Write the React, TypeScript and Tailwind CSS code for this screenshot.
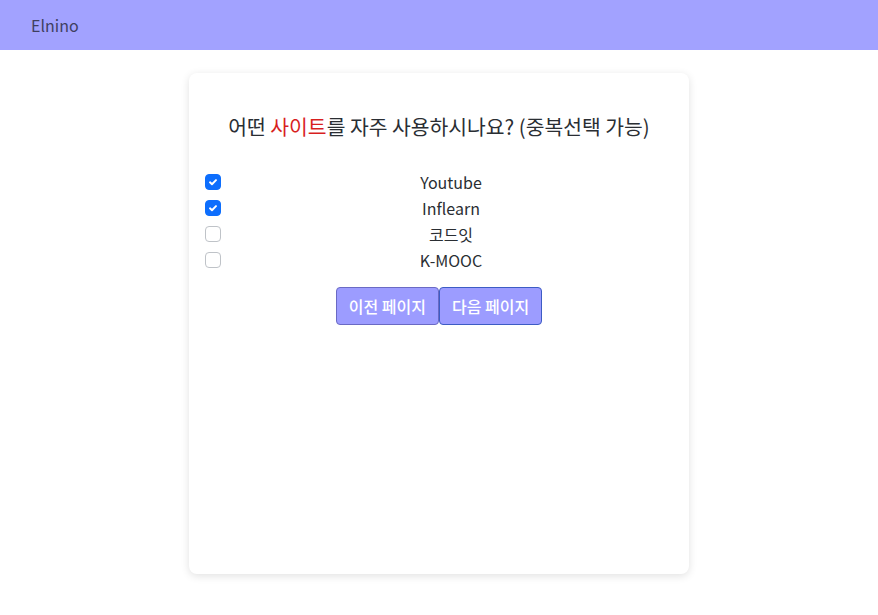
import React, { useState } from 'react';

const SITES = ['Youtube', 'Inflearn', '코드잇', 'K-MOOC'];

const font = { fontFamily: '"Noto Sans CJK KR", "Noto Sans", sans-serif' };

const App: React.FC = () => {
  const [checked, setChecked] = useState<string[]>(['Youtube', 'Inflearn']);

  const toggle = (name: string) => {
    setChecked(prev => (prev.includes(name) ? prev.filter(n => n !== name) : [...prev, name]));
  };

  return (
    <div className="min-h-screen bg-white text-[#212529] font-['Noto_Sans_CJK_KR','Noto_Sans',sans-serif]">
      <header className="h-[50px] bg-[#a2a2ff] flex items-center px-[31px]">
        <span className="text-[16px] text-[#3f3f5f]">Elnino</span>
      </header>

      <div className="flex justify-center pt-[23px]">
        <div className="w-[500px] h-[501px] bg-white rounded-lg shadow-[0_2px_8px_rgba(0,0,0,0.12)] px-4 pt-[39px]">
          <h2 className="text-center text-[20.4px] leading-[28px] text-[#2a2e33]">
            어떤 <span className="text-[#d81f1f]">사이트</span>를 자주 사용하시나요? (중복선택 가능)
          </h2>

          <div className="mt-[29px] flex flex-col">
            {SITES.map(site => {
              const on = checked.includes(site);
              return (
                <label key={site} className="flex items-center h-[26px] cursor-pointer" onClick={() => toggle(site)}>
                  <span
                    className={`w-4 h-4 rounded-[4px] flex items-center justify-center shrink-0 ${
                      on ? 'bg-[#0d6efd] border border-[#0d6efd]' : 'bg-white border border-[#bfc3c8]'
                    }`}
                  >
                    {on && (
                      <svg width="12" height="12" viewBox="0 0 20 20">
                        <path d="M5 10.5l3.3 3.2L15 6.8" fill="none" stroke="#fff" strokeWidth="3.2" strokeLinecap="round" strokeLinejoin="round" />
                      </svg>
                    )}
                  </span>
                  <span className="flex-1 ml-2 text-center text-[16px] text-[#2a2e33]">{site}</span>
                </label>
              );
            })}
          </div>

          <div className="flex justify-center mt-[14px]">
            <button className="h-[38px] px-3 bg-[#9c9cff] text-white font-medium text-[16px] rounded-[4px] border border-[#6a6ac4]" style={font}>
              이전 페이지
            </button>
            <button className="h-[38px] px-3 bg-[#9c9cff] text-white font-medium text-[16px] rounded-[4px] border border-[#3d5cc4]" style={font}>
              다음 페이지
            </button>
          </div>
        </div>
      </div>
    </div>
  );
};

export default App;
